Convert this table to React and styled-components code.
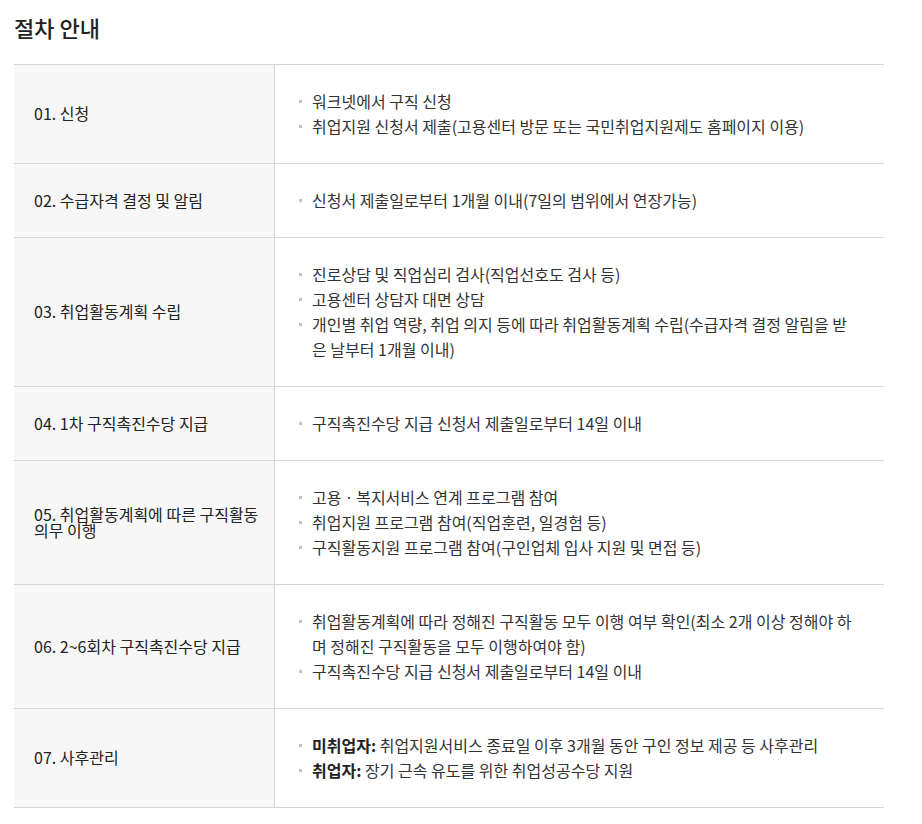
import React from "react";
import styled, { createGlobalStyle } from "styled-components";

const Global = createGlobalStyle`
  html, body { margin: 0; padding: 0; background: #fff; }
  body {
    font-family: "Noto Sans CJK KR", "Noto Sans", sans-serif;
    color: #333;
  }
`;

const Page = styled.div`
  padding: 12px 38px 16px 14px;
`;

const Title = styled.h2`
  margin: 0 0 22px;
  font-size: 22px;
  line-height: 30px;
  font-weight: 500;
  color: #222;
  letter-spacing: 0;
`;

const Table = styled.div`
  border-top: 1px solid #d5d5d5;
  display: grid;
  grid-template-columns: 261px 1fr;
`;

const Head = styled.div`
  background: #f7f7f7;
  border-right: 1px solid #d5d5d5;
  border-bottom: 1px solid #d5d5d5;
  padding: 0 12px 2px 20px;
  display: flex;
  align-items: center;
  font-size: 16px;
  line-height: 16px;
  color: #222;
  letter-spacing: 0;
`;

const Body = styled.div`
  border-bottom: 1px solid #d5d5d5;
  padding: 24px 24px 24px 24px;
  display: flex;
  align-items: center;
`;

const List = styled.ul`
  margin: 0;
  padding: 0;
  list-style: none;
`;

const Item = styled.li`
  position: relative;
  padding-left: 13px;
  font-size: 16px;
  line-height: 25px;
  color: #333;
  letter-spacing: 0;
  word-break: break-all;
  &::before {
    content: "";
    position: absolute;
    left: 0;
    top: 11px;
    width: 3px;
    height: 3px;
    background: #c4c4c4;
  }
`;

const Strong = styled.b`
  font-weight: 700;
  color: #222;
`;

const rows = [
  ["01. 신청", ["워크넷에서 구직 신청", "취업지원 신청서 제출(고용센터 방문 또는 국민취업지원제도 홈페이지 이용)"]],
  ["02. 수급자격 결정 및 알림", ["신청서 제출일로부터 1개월 이내(7일의 범위에서 연장가능)"]],
  [
    "03. 취업활동계획 수립",
    [
      "진로상담 및 직업심리 검사(직업선호도 검사 등)",
      "고용센터 상담자 대면 상담",
      "개인별 취업 역량, 취업 의지 등에 따라 취업활동계획 수립(수급자격 결정 알림을 받은 날부터 1개월 이내)",
    ],
  ],
  ["04. 1차 구직촉진수당 지급", ["구직촉진수당 지급 신청서 제출일로부터 14일 이내"]],
  [
    "05. 취업활동계획에 따른 구직활동 의무 이행",
    [
      "고용ㆍ복지서비스 연계 프로그램 참여",
      "취업지원 프로그램 참여(직업훈련, 일경험 등)",
      "구직활동지원 프로그램 참여(구인업체 입사 지원 및 면접 등)",
    ],
  ],
  [
    "06. 2~6회차 구직촉진수당 지급",
    [
      "취업활동계획에 따라 정해진 구직활동 모두 이행 여부 확인(최소 2개 이상 정해야 하며 정해진 구직활동을 모두 이행하여야 함)",
      "구직촉진수당 지급 신청서 제출일로부터 14일 이내",
    ],
  ],
  [
    "07. 사후관리",
    [
      [<Strong key="a">미취업자:</Strong>, " 취업지원서비스 종료일 이후 3개월 동안 구인 정보 제공 등 사후관리"],
      [<Strong key="b">취업자:</Strong>, " 장기 근속 유도를 위한 취업성공수당 지원"],
    ],
  ],
];

export default function App() {
  return (
    <Page>
      <Global />
      <Title>절차 안내</Title>
      <Table>
        {rows.map(([head, items]) => (
          <React.Fragment key={head}>
            <Head>{head}</Head>
            <Body>
              <List>
                {items.map((it, i) => (
                  <Item key={i}>{it}</Item>
                ))}
              </List>
            </Body>
          </React.Fragment>
        ))}
      </Table>
    </Page>
  );
}
